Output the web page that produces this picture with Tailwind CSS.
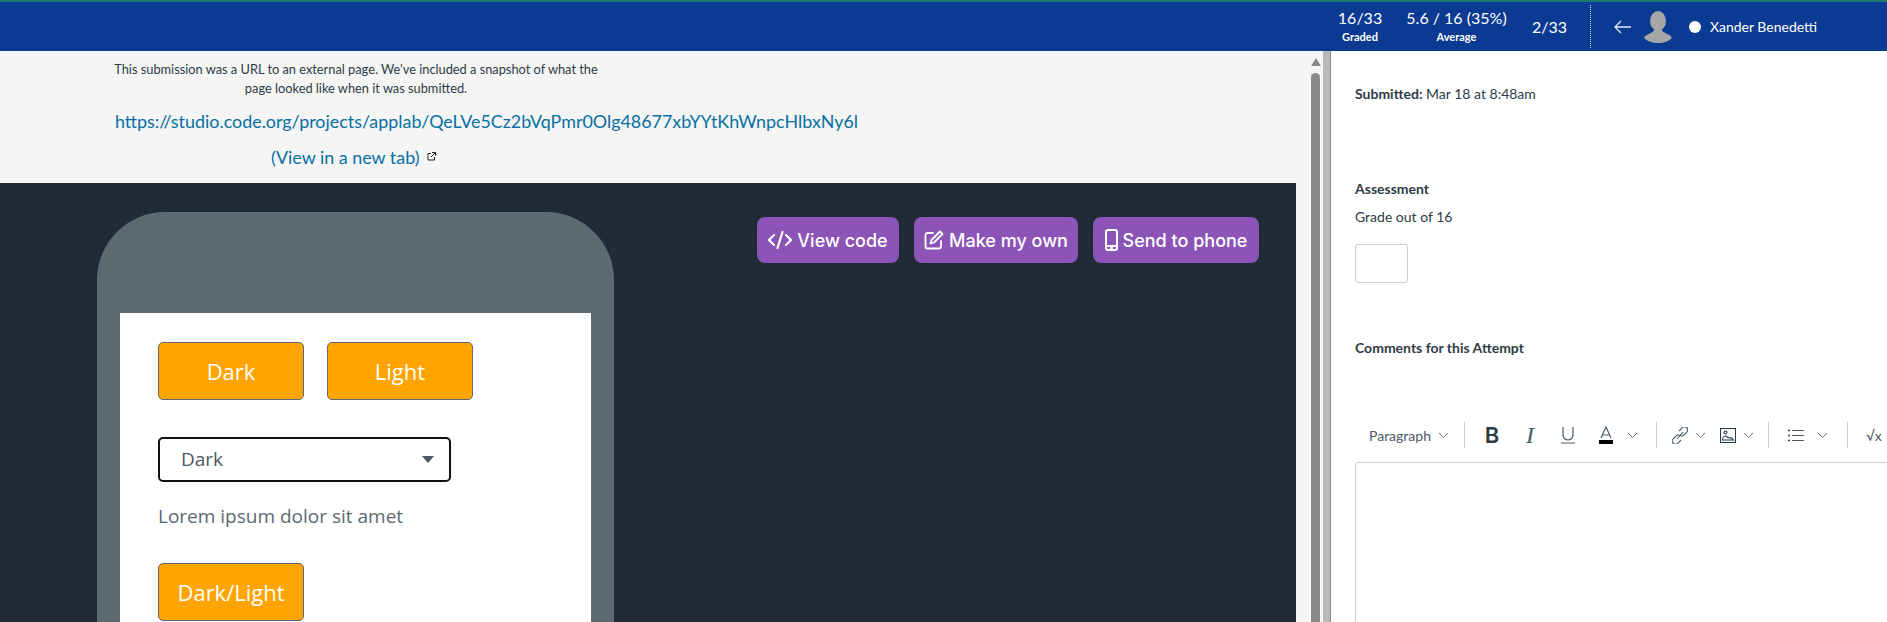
<!DOCTYPE html>
<html>
  <head>
    <meta charset="UTF-8" />
    <meta name="viewport" content="width=device-width, initial-scale=1.0" />
    <script src="https://cdn.jsdelivr.net/npm/@tailwindcss/browser@4"></script>
  </head>
  <body class="bg-white h-screen overflow-hidden font-['Lato',sans-serif]">
    <!-- Top bar -->
    <header class="h-[51px] bg-[#0a3a91] border-t-2 border-[#127a6e] flex items-center pl-[1338px] text-white">
      <div class="w-[44px] flex flex-col items-center shrink-0 pb-[2px]">
        <span class="text-[16px] leading-[20px] mb-[2px] whitespace-nowrap">16/33</span>
        <span class="text-[11px] leading-[13px] font-bold">Graded</span>
      </div>
      <div class="w-[105px] ml-[22px] flex flex-col items-center shrink-0 pb-[2px]">
        <span class="text-[16px] leading-[20px] mb-[2px] whitespace-nowrap">5.6 / 16 (35%)</span>
        <span class="text-[11px] leading-[13px] font-bold">Average</span>
      </div>
      <span class="ml-[23px] text-[16px] w-[34px] shrink-0">2/33</span>
      <div class="ml-[24px] h-[43px] border-l border-dotted border-white/80"></div>
      <svg class="ml-[23px]" width="18" height="14" viewBox="0 0 18 14" fill="none" stroke="#dfe6f5" stroke-width="1.3"><path d="M1 7h16M7 1L1 7l6 6"/></svg>
      <svg class="ml-[12px]" width="28" height="32" viewBox="0 0 28 32" fill="#a6a6a6"><ellipse cx="14" cy="10" rx="8" ry="10"/><path d="M10 19c0 3-9 4-10 8 3 3 8 5 14 5s11-2 14-5c-1-4-10-5-10-8z"/></svg>
      <span class="ml-[17px] w-[12px] h-[12px] rounded-full bg-white shrink-0"></span>
      <span class="ml-[9px] text-[14px] whitespace-nowrap">Xander Benedetti</span>
    </header>

    <main class="flex h-[571px] overflow-hidden">
      <!-- Submission preview -->
      <section class="w-[1323px] shrink-0 flex bg-[#f5f5f5]">
        <div class="w-[1296px] shrink-0 flex flex-col">
          <div class="h-[132px] pl-[115px]">
            <p class="w-[490px] -ml-[4px] pt-[9px] text-center text-[12.8px] leading-[19px] text-[#2d3b45]">This submission was a URL to an external page. We've included a snapshot of what the page looked like when it was submitted.</p>
            <a class="block mt-[11px] text-[17.9px] leading-[24px] text-[#0770a3] whitespace-nowrap">https://studio.code.org/projects/applab/QeLVe5Cz2bVqPmr0Olg48677xbYYtKhWnpcHlbxNy6l</a>
            <div class="flex items-center ml-[156px] mt-[12px]">
              <a class="text-[17.9px] leading-[24px] text-[#0770a3] whitespace-nowrap">(View in a new tab)</a>
              <svg class="ml-[8px] mb-[2px]" width="9" height="9" viewBox="0 0 9 9" fill="none" stroke="#222" stroke-width="1"><path d="M4 1.500H1v6.500h6.500V5M5 .5h3.500v3.500M8.500 .5L4 5"/></svg>
            </div>
          </div>
          <div class="flex-1 bg-[#202b35] flex overflow-hidden">
            <!-- Phone frame -->
            <div class="ml-[97px] mt-[29px] w-[517px] h-[500px] shrink-0 rounded-t-[68px] bg-[#5c6971] pt-[101px] px-[23px]">
              <div class="h-[399px] bg-white pt-[29px] pl-[38px] font-['Open_Sans',sans-serif]">
                <div class="flex gap-[23px]">
                  <button class="w-[146px] h-[58px] rounded-[5px] bg-[#ffa400] border border-[#5c6971] text-white text-[22px]">Dark</button>
                  <button class="w-[146px] h-[58px] rounded-[5px] bg-[#ffa400] border border-[#5c6971] text-white text-[22px]">Light</button>
                </div>
                <div class="mt-[37px] w-[293px] h-[45px] rounded-[5px] border-2 border-[#111] flex items-center justify-between pl-[21px] pr-[15px] text-[19px] text-[#4d5860]">
                  <span>Dark</span>
                  <span class="w-0 h-0 border-l-[6px] border-r-[6px] border-t-[7px] border-l-transparent border-r-transparent border-t-[#4d5860]"></span>
                </div>
                <p class="mt-[21px] text-[19px] leading-[26px] text-[#5c6971]">Lorem ipsum dolor sit amet</p>
                <button class="mt-[34px] w-[146px] h-[58px] rounded-[5px] bg-[#ffa400] border border-[#5c6971] text-white text-[22px]">Dark/Light</button>
              </div>
            </div>
            <!-- Actions -->
            <div class="ml-[143px] mt-[34px] flex gap-[15px] h-[46px] font-['Inter',sans-serif] text-[18px] font-medium text-white">
              <button class="w-[142px] rounded-[8px] bg-[#8c54b6] flex items-center justify-center gap-[5px]">
                <svg width="24" height="20" viewBox="0 0 24 20" fill="none" stroke="white" stroke-width="2.200" stroke-linecap="round" stroke-linejoin="round"><path d="M6 5l-5 5 5 5M18 5l5 5-5 5M14.500 2L9.500 18"/></svg>
                View code
              </button>
              <button class="w-[164px] rounded-[8px] bg-[#8c54b6] flex items-center justify-center gap-[5px]">
                <svg width="20" height="20" viewBox="0 0 20 20" fill="none" stroke="white" stroke-width="1.800" stroke-linecap="round" stroke-linejoin="round"><path d="M9 3H3.500A2 2 0 0 0 1.500 5v11.500a2 2 0 0 0 2 2H15a2 2 0 0 0 2-2V11"/><path d="M16 1.500l2.500 2.500L10 12.500l-3.500 1 1-3.500z"/></svg>
                Make my own
              </button>
              <button class="w-[166px] rounded-[8px] bg-[#8c54b6] flex items-center justify-center gap-[5px]">
                <svg width="13" height="22" viewBox="0 0 13 22" fill="none" stroke="white" stroke-width="2"><rect x="1" y="1" width="11" height="20" rx="2"/><path d="M1 17h11" /><circle cx="6.500" cy="19" r=".6" fill="white"/></svg>
                Send to phone
              </button>
            </div>
          </div>
        </div>
        <!-- Scrollbar -->
        <div class="w-[27px] flex flex-col items-start pt-[7px] pl-[15px]">
          <span class="w-0 h-0 border-l-[5px] border-r-[5px] border-b-[8px] border-l-transparent border-r-transparent border-b-[#8a8a8a]"></span>
          <span class="mt-[7px] w-[9px] flex-1 rounded-t-full bg-[#8a8a8a]"></span>
        </div>
      </section>

      <div class="w-[8px] shrink-0 bg-[#b9b9b9] border-r border-[#8f8f8f]"></div>

      <!-- Grading sidebar -->
      <aside class="flex-1 min-w-0 pl-[24px] text-[#2d3b45] overflow-hidden">
        <p class="mt-[34px] text-[14px] leading-[18px]"><b>Submitted:</b> Mar 18 at 8:48am</p>
        <h3 class="mt-[77px] text-[14px] leading-[18px] font-bold">Assessment</h3>
        <p class="mt-[10px] text-[14px] leading-[18px]">Grade out of 16</p>
        <div class="mt-[18px] w-[53px] h-[39px] rounded-[3px] border border-[#c7cdd1] bg-white"></div>
        <h3 class="mt-[56px] text-[14px] leading-[18px] font-bold">Comments for this Attempt</h3>
        <!-- Editor toolbar -->
        <div class="mt-[65px] h-[26px] flex items-center pl-[14px] whitespace-nowrap">
          <span class="text-[14px] text-[#4a5a66]">Paragraph</span>
          <svg class="ml-[7px]" width="11" height="7" viewBox="0 0 11 7" fill="none" stroke="#6b7780"><path d="M1 1l4.500 4.500L10 1"/></svg>
          <span class="ml-[15px] h-[26px] border-l border-[#c7cdd1]"></span>
          <span class="ml-[19px] w-[16px] text-center text-[22px] leading-none font-semibold text-[#2d3b45] font-['Inter',sans-serif]">B</span>
          <span class="ml-[22px] w-[16px] text-center text-[24px] leading-none italic text-[#4a5a66] font-['Liberation_Serif',serif]">I</span>
          <span class="ml-[22px] w-[16px] flex flex-col items-center">
            <svg width="14" height="18" viewBox="0 0 14 18" fill="none" stroke="#4a5a66" stroke-width="1.200"><path d="M2 1v8a5 5 0 0 0 10 0V1M0 17h14"/></svg>
          </span>
          <span class="ml-[23px] w-[14px] flex flex-col items-center">
            <svg width="14" height="18" viewBox="0 0 14 18" fill="none" stroke="#4a5a66" stroke-width="1.200"><path d="M2 12L7 1l5 11M3.500 9h7"/><rect x="0" y="14" width="14" height="4" fill="#000" stroke="none"/></svg>
          </span>
          <svg class="ml-[14px]" width="11" height="7" viewBox="0 0 11 7" fill="none" stroke="#6b7780"><path d="M1 1l4.500 4.500L10 1"/></svg>
          <span class="ml-[18px] h-[26px] border-l border-[#c7cdd1]"></span>
          <svg class="ml-[15px]" width="16" height="17" viewBox="0 0 16 17" fill="none" stroke="#4a5a66" stroke-width="1.100"><path d="M7 4l3-3a2.500 2.500 0 0 1 5 4l-3 3a2.500 2.500 0 0 1-4 0M9 13l-3 3a2.500 2.500 0 0 1-5-4l3-3a2.500 2.500 0 0 1 4 0M5 12l6-7"/></svg>
          <svg class="ml-[7px]" width="11" height="7" viewBox="0 0 11 7" fill="none" stroke="#6b7780"><path d="M1 1l4.500 4.500L10 1"/></svg>
          <svg class="ml-[14px]" width="16" height="15" viewBox="0 0 16 15" fill="none" stroke="#2d3b45" stroke-width="1.100"><rect x=".5" y=".5" width="15" height="14"/><circle cx="5.500" cy="4.500" r="1.500"/><path d="M2.500 12c0-3 2-4 3-4s2 2 4 2 2-1 4 2zM2.500 12h11"/></svg>
          <svg class="ml-[7px]" width="11" height="7" viewBox="0 0 11 7" fill="none" stroke="#6b7780"><path d="M1 1l4.500 4.500L10 1"/></svg>
          <span class="ml-[14px] h-[26px] border-l border-[#c7cdd1]"></span>
          <svg class="ml-[19px]" width="16" height="13" viewBox="0 0 16 13" fill="none" stroke="#4a5a66" stroke-width="1.100"><path d="M4 1.500h12M4 6.500h12M4 11.500h12"/><circle cx="1" cy="1.500" r="1" fill="#2d3b45" stroke="none"/><circle cx="1" cy="6.500" r="1" fill="#2d3b45" stroke="none"/><circle cx="1" cy="11.500" r="1" fill="#2d3b45" stroke="none"/></svg>
          <svg class="ml-[13px]" width="11" height="7" viewBox="0 0 11 7" fill="none" stroke="#6b7780"><path d="M1 1l4.500 4.500L10 1"/></svg>
          <span class="ml-[19px] h-[26px] border-l border-[#c7cdd1]"></span>
          <span class="ml-[18px] text-[14px] text-[#4a5a66]">√x</span>
        </div>
        <!-- Editor box -->
        <div class="mt-[14px] h-[200px] w-[700px] rounded-tl-[3px] border border-[#c7cdd1] bg-white"></div>
      </aside>
    </main>
  </body>
</html>
